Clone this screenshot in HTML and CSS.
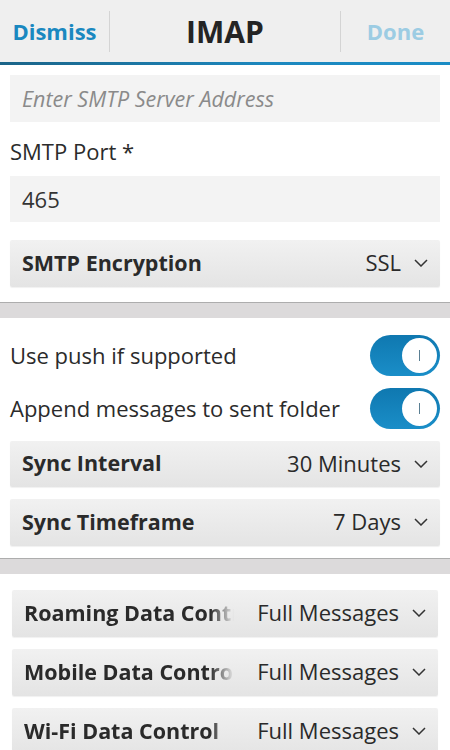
FILE: index.html
```html
<!DOCTYPE html>
<html>
<head>
<meta charset="utf-8">
<link rel="stylesheet" href="styles.css">
</head>
<body>
<header class="titlebar">
  <div class="tb-side"><span class="tb-dismiss">Dismiss</span></div>
  <div class="tb-title">IMAP</div>
  <div class="tb-side tb-right"><span class="tb-done">Done</span></div>
</header>
<div class="accent"></div>

<section class="group">
  <div class="field field-first"><span class="placeholder">Enter SMTP Server Address</span></div>
  <div class="label">SMTP Port *</div>
  <div class="field"><span class="value-text">465</span></div>
  <div class="dropdown dd-gap">
    <span class="dd-label">SMTP Encryption</span>
    <span class="dd-value">SSL</span>
    <svg class="chev" width="14" height="8" viewBox="0 0 14 8"><polyline points="1,1 7,7 13,1" fill="none" stroke="#333" stroke-width="1.5"/></svg>
  </div>
</section>

<div class="divider"></div>

<section class="group group-2">
  <div class="toggle-row">
    <span class="toggle-label">Use push if supported</span>
    <div class="toggle"><div class="thumb"><span class="thumb-line"></span></div></div>
  </div>
  <div class="toggle-row row-2">
    <span class="toggle-label">Append messages to sent folder</span>
    <div class="toggle"><div class="thumb"><span class="thumb-line"></span></div></div>
  </div>
  <div class="dropdown dd-first">
    <span class="dd-label">Sync Interval</span>
    <span class="dd-value">30 Minutes</span>
    <svg class="chev" width="14" height="8" viewBox="0 0 14 8"><polyline points="1,1 7,7 13,1" fill="none" stroke="#333" stroke-width="1.5"/></svg>
  </div>
  <div class="dropdown dd-next">
    <span class="dd-label">Sync Timeframe</span>
    <span class="dd-value">7 Days</span>
    <svg class="chev" width="14" height="8" viewBox="0 0 14 8"><polyline points="1,1 7,7 13,1" fill="none" stroke="#333" stroke-width="1.5"/></svg>
  </div>
</section>

<div class="divider divider-2"></div>

<section class="group group-3">
  <div class="dropdown dd-split">
    <span class="dd-label fade">Roaming Data Control</span>
    <span class="dd-value">Full Messages</span>
    <svg class="chev" width="14" height="8" viewBox="0 0 14 8"><polyline points="1,1 7,7 13,1" fill="none" stroke="#333" stroke-width="1.5"/></svg>
  </div>
  <div class="dropdown dd-split dd-next">
    <span class="dd-label fade">Mobile Data Control</span>
    <span class="dd-value">Full Messages</span>
    <svg class="chev" width="14" height="8" viewBox="0 0 14 8"><polyline points="1,1 7,7 13,1" fill="none" stroke="#333" stroke-width="1.5"/></svg>
  </div>
  <div class="dropdown dd-split dd-next">
    <span class="dd-label fade">Wi-Fi Data Control</span>
    <span class="dd-value">Full Messages</span>
    <svg class="chev" width="14" height="8" viewBox="0 0 14 8"><polyline points="1,1 7,7 13,1" fill="none" stroke="#333" stroke-width="1.5"/></svg>
  </div>
</section>
</body>
</html>
```

FILE: styles.css
```css
html, body {
  margin: 0;
  padding: 0;
  background: #ffffff;
  font-family: "Open Sans", "Noto Sans", sans-serif;
  color: #2b2b2b;
  overflow: hidden;
}

.titlebar {
  display: flex;
  align-items: center;
  height: 62px;
  background: #efefef;
}

.tb-side {
  width: 109px;
  height: 41px;
  display: flex;
  align-items: center;
  justify-content: center;
  border-right: 1px solid #d4d4d4;
  font-size: 22px;
  font-weight: 700;
}

.tb-right {
  border-right: none;
  border-left: 1px solid #d4d4d4;
}

.tb-dismiss { color: #1a88c0; }
.tb-done { color: #9ccce3; }

.tb-title {
  flex: 1;
  text-align: center;
  font-size: 30px;
  font-weight: 700;
  color: #242424;
}

.accent {
  height: 3px;
  background: linear-gradient(to right, #1b6488, #1c88bf 60%, #1a8cc5);
}

.group {
  padding: 0 10px;
}

.field {
  height: 46px;
  background: #f3f3f3;
  display: flex;
  align-items: center;
  padding: 0 12px;
  font-size: 22px;
}

.field-first {
  margin-top: 10px;
  height: 47px;
}

.placeholder {
  font-style: italic;
  color: #8a8a8a;
  font-weight: 400;
  font-size: 21.5px;
}

.value-text { color: #333; }

.label {
  padding: 14px 0 10px;
  line-height: 30px;
  font-size: 22px;
  color: #2b2b2b;
}

.dropdown {
  height: 47px;
  display: flex;
  align-items: center;
  padding: 0 12px 3px;
  box-sizing: border-box;
  background: linear-gradient(to bottom, #f1f1f1, #e4e4e4);
  border-radius: 2px;
  box-shadow: 0 1px 1px rgba(0,0,0,0.06);
  font-size: 22px;
  color: #2a2a2a;
}

.dd-gap { margin-top: 18px; margin-bottom: 15px; }

.dd-label {
  font-weight: 700;
  font-size: 21.5px;
  flex: 1;
  white-space: nowrap;
}

.dd-value {
  margin-right: 13px;
  white-space: nowrap;
}

.chev { flex: none; margin-top: 2px; }

.divider {
  height: 15px;
  border-top: 1px solid #adadad;
  background: #dcdadb;
}

.group-2 { padding-top: 16px; }

.toggle-row {
  display: flex;
  align-items: center;
  justify-content: space-between;
  height: 42px;
}

.row-2 { margin-top: 11px; }

.toggle-label {
  font-size: 22px;
  color: #2b2b2b;
}

.toggle {
  width: 70px;
  height: 41px;
  border-radius: 21px;
  background: linear-gradient(to bottom, #0f78b0, #1a8ec8);
  display: flex;
  align-items: center;
  justify-content: flex-end;
  padding-right: 3px;
  box-sizing: border-box;
}

.thumb {
  width: 35px;
  height: 35px;
  border-radius: 50%;
  background: #ffffff;
  display: flex;
  align-items: center;
  justify-content: center;
}

.thumb-line {
  width: 1px;
  height: 11px;
  background: #5a7f93;
}

.dd-first { margin-top: 12px; height: 46px; }
.dd-next { margin-top: 12px; }

.divider-2 { margin-top: 12px; }

.group-3 {
  padding: 16px 12px 0;
}

.dd-split .dd-label {
  flex: none;
  width: 212px;
  overflow: hidden;
  -webkit-mask-image: linear-gradient(to right, #000 186px, transparent 210px);
  mask-image: linear-gradient(to right, #000 186px, transparent 210px);
}

.dd-split .dd-value {
  margin-left: auto;
}
```
